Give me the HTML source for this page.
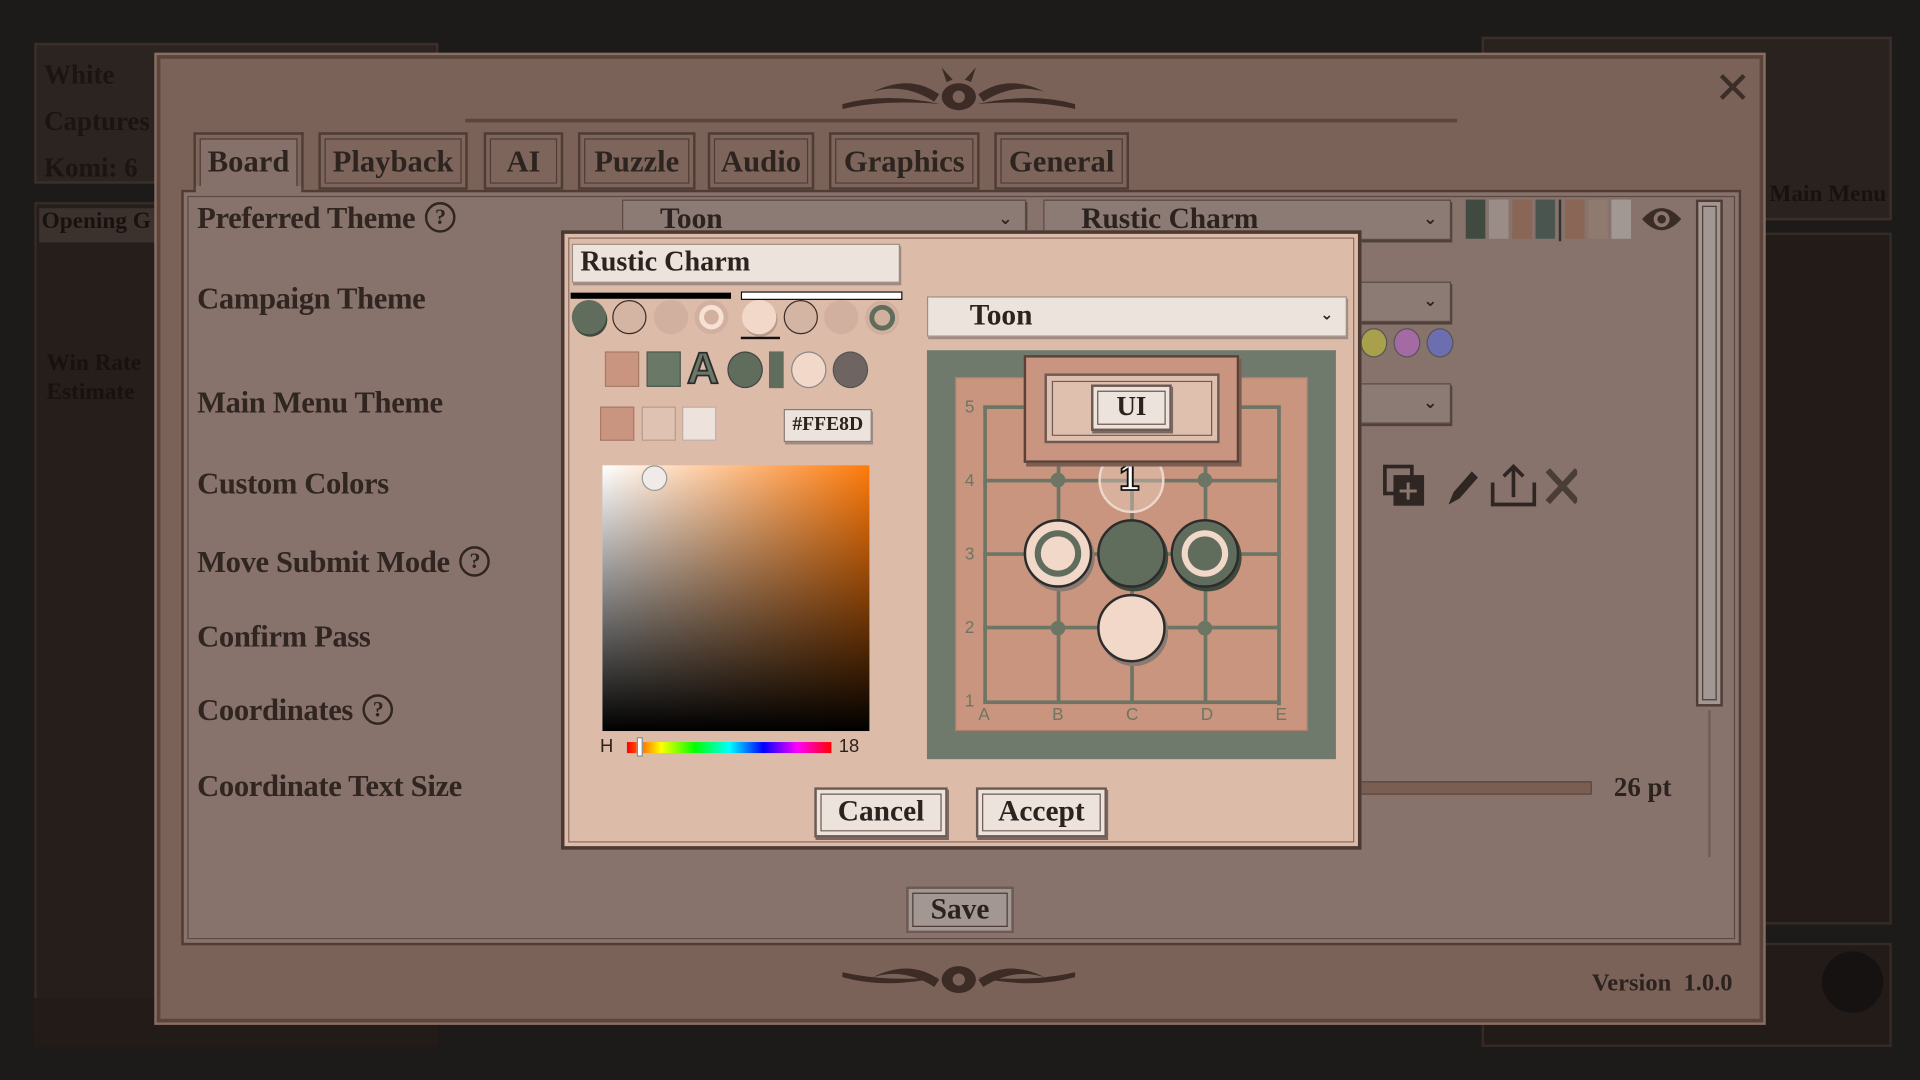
<!DOCTYPE html>
<html><head><meta charset="utf-8"><style>
*{box-sizing:border-box;margin:0;padding:0}
html,body{width:1920px;height:1080px;overflow:hidden;background:#1d1b1a}
#w{position:absolute;left:0;top:0;width:1568px;height:882px;transform:scale(1.22449);transform-origin:0 0;font-family:"Liberation Serif",serif;color:#2c221e}
.a{position:absolute}
.lbl{position:absolute;left:161px;font-size:25px;font-weight:bold;color:#302520;letter-spacing:-0.3px}
.q{display:inline-block;width:25px;height:25px;border:2px solid #302520;border-radius:50%;font-size:18px;text-align:center;line-height:21px;vertical-align:3px;margin-left:8px}
.tab{position:absolute;top:108px;height:47px;background:#7d655b;border:2px solid #4e3c35;box-shadow:inset 0 0 0 3px #7d655b,inset 0 0 0 4px #4e3c35;font-size:25px;font-weight:bold;text-align:center;line-height:46px;color:#2e241f}
.dd{position:absolute;background:#8c7b75;border:1px solid #5a4a44;box-shadow:1px 2px 0 #4f403a;font-size:24px;font-weight:bold;padding-left:30px;line-height:31px}
.chev{position:absolute;right:10px;top:0px;font-size:14px;font-family:"DejaVu Sans",sans-serif}
.c{position:absolute;border-radius:50%}
.btn{position:absolute;background:#ede3dd;border:2px solid #6d5a52;box-shadow:inset 0 0 0 3px #ede3dd,inset 0 0 0 4px #6d5a52,1px 2px 0 #7a675f;text-align:center;font-weight:bold;font-size:24px}
.gl{position:absolute;background:#6d7565}
</style></head><body><div id="w">
<div class="a" style="left:28px;top:35px;width:330px;height:115px;background:#2c2420;border:2px solid #3a2f2a"></div>
<div class="a" style="left:36px;top:42px;font-size:22px;color:#1a1412;font-weight:bold;line-height:38px">White<br>Captures<br>Komi: 6</div>
<div class="a" style="left:28px;top:165px;width:125px;height:675px;background:#251e1b;border:2px solid #342a26"></div>
<div class="a" style="left:32px;top:170px;width:120px;height:28px;background:#3b322e;font-size:19px;color:#17110f;font-weight:bold;padding-left:2px">Opening G</div>
<div class="a" style="left:38px;top:285px;font-size:19px;color:#17110f;font-weight:bold;line-height:24px">Win Rate<br>Estimate</div>
<div class="a" style="left:1210px;top:30px;width:335px;height:150px;background:#2a221f;border:2px solid #3a2f2a"></div>
<div class="a" style="left:1445px;top:148px;font-size:19px;color:#17110f;font-weight:bold">Main Menu</div>
<div class="a" style="left:1210px;top:190px;width:335px;height:565px;background:#231b18;border:2px solid #342a26"></div>
<div class="a" style="left:1210px;top:770px;width:335px;height:85px;background:#231b18;border:2px solid #342a26"></div>
<div class="c" style="left:1488px;top:777px;width:50px;height:50px;background:#151211"></div>
<div class="a" style="left:28px;top:815px;width:330px;height:40px;background:#231b18"></div>
<div class="a" style="left:128px;top:45px;width:1312px;height:790px;background:#7b6258;border:3px solid #5a453d;box-shadow:0 0 0 2px #8a6e62"></div>
<div class="a" style="left:380px;top:97px;width:810px;height:3px;background:#5b463d"></div>
<svg class="a" style="left:683px;top:55px" width="200" height="45" viewBox="0 0 200 45"><g fill="#3c2c25"><ellipse cx="100" cy="24" rx="14" ry="11"/><path d="M84 22 Q60 5 30 20 Q55 12 80 28Z M116 22 Q140 5 170 20 Q145 12 120 28Z M5 30 Q40 20 85 30 Q40 26 5 34Z M195 30 Q160 20 115 30 Q160 26 195 34Z M90 12 L86 0 L95 10Z M110 12 L114 0 L105 10Z"/></g><circle cx="100" cy="24" r="5" fill="#7b6258"/></svg>
<svg class="a" style="left:683px;top:778px" width="200" height="45" viewBox="0 0 200 45"><g fill="#3c2c25"><ellipse cx="100" cy="22" rx="14" ry="11"/><path d="M84 22 Q60 5 30 20 Q55 12 80 28Z M116 22 Q140 5 170 20 Q145 12 120 28Z M5 20 Q40 30 85 20 Q40 24 5 16Z M195 20 Q160 30 115 20 Q160 24 195 16Z"/></g><circle cx="100" cy="22" r="5" fill="#7b6258"/></svg>
<div class="a" style="left:1400px;top:52px;font-size:36px;color:#3b2d27;font-family:'DejaVu Sans',sans-serif">✕</div>
<div class="tab" style="left:158px;width:90px;height:52px;background:#86716a;border-bottom:none">Board</div>
<div class="tab" style="left:260px;width:122px">Playback</div>
<div class="tab" style="left:395px;width:65px">AI</div>
<div class="tab" style="left:472px;width:96px">Puzzle</div>
<div class="tab" style="left:578px;width:87px">Audio</div>
<div class="tab" style="left:677px;width:123px">Graphics</div>
<div class="tab" style="left:812px;width:110px">General</div>
<div class="a" style="left:148px;top:155px;width:1274px;height:617px;background:#87736b;border:2px solid #4e3c35;box-shadow:inset 0 0 0 3px #87736b,inset 0 0 0 4px #5a4841"></div>
<div class="a" style="left:160px;top:152px;width:86px;height:8px;background:#86716a"></div>
<div class="lbl" style="top:165px">Preferred Theme<span class="q">?</span></div>
<div class="lbl" style="top:231px">Campaign Theme</div>
<div class="lbl" style="top:316px">Main Menu Theme</div>
<div class="lbl" style="top:382px">Custom Colors</div>
<div class="lbl" style="top:446px">Move Submit Mode<span class="q">?</span></div>
<div class="lbl" style="top:507px">Confirm Pass</div>
<div class="lbl" style="top:567px">Coordinates<span class="q">?</span></div>
<div class="lbl" style="top:629px">Coordinate Text Size</div>
<div class="dd" style="left:508px;top:163px;width:330px;height:33px">Toon<span class="chev">⌄</span></div>
<div class="dd" style="left:852px;top:163px;width:333px;height:33px">Rustic Charm<span class="chev">⌄</span></div>
<div class="dd" style="left:1100px;top:230px;width:85px;height:33px"><span class="chev">⌄</span></div>
<div class="dd" style="left:1100px;top:313px;width:85px;height:33px"><span class="chev">⌄</span></div>
<div class="a" style="left:1197px;top:163px;display:flex;gap:3px">
<div style="width:16px;height:32px;background:#414a40"></div><div style="width:16px;height:32px;background:#9a8c87"></div><div style="width:16px;height:32px;background:#8a6656"></div><div style="width:16px;height:32px;background:#4a5550"></div><div style="width:2px;height:34px;background:#333"></div><div style="width:16px;height:32px;background:#8a6656"></div><div style="width:16px;height:32px;background:#8f7a70"></div><div style="width:16px;height:32px;background:#a29893"></div></div>
<svg class="a" style="left:1340px;top:167px" width="34" height="24" viewBox="0 0 34 24"><path d="M1 12 Q17 -6 33 12 Q17 30 1 12Z" fill="#3a2d28"/><circle cx="17" cy="12" r="5" fill="none" stroke="#8a766c" stroke-width="3"/></svg>
<div class="c" style="left:1111px;top:268px;width:22px;height:24px;background:#a8a04a;border:1px solid #555"></div>
<div class="c" style="left:1138px;top:268px;width:22px;height:24px;background:#a36aa3;border:1px solid #555"></div>
<div class="c" style="left:1165px;top:268px;width:22px;height:24px;background:#6d6eb0;border:1px solid #555"></div>
<svg class="a" style="left:1128px;top:378px" width="160" height="38" viewBox="0 0 160 38"><g fill="none" stroke="#2f2522" stroke-width="3"><rect x="3" y="3" width="22" height="22"/></g><rect x="10" y="10" width="25" height="25" fill="#2f2522"/><path d="M22 16v14M15 23h14" stroke="#8a766c" stroke-width="2.5"/><path d="M55 34l4-10 15-17 5 5-15 17z" fill="#2f2522"/><path d="M91 16v18h34V16M108 28V4M100 11l8-8 8 8" fill="none" stroke="#2f2522" stroke-width="3"/><path d="M136 6l24 26M160 6l-24 26" stroke="#4a3c37" stroke-width="5"/></svg>
<div class="a" style="left:1385px;top:163px;width:22px;height:414px;border:2px solid #4e3c35;background:#a39794;box-shadow:inset 0 0 0 3px #a39794,inset 0 0 0 4px #4e3c35"></div>
<div class="a" style="left:1395px;top:580px;width:2px;height:120px;background:#6e5c55"></div>
<div class="a" style="left:1110px;top:638px;width:190px;height:11px;background:#7a5e52;border:1px solid #5a463f"></div>
<div class="a" style="left:1318px;top:630px;font-size:22px;font-weight:bold">26 pt</div>
<div class="btn" style="left:740px;top:724px;width:88px;height:38px;background:#a29793;box-shadow:inset 0 0 0 3px #a29793,inset 0 0 0 4px #4e3c35;line-height:34px">Save</div>
<div class="a" style="left:1300px;top:792px;font-size:20px;font-weight:bold">Version&nbsp; 1.0.0</div>
<div class="a" style="left:458px;top:188px;width:654px;height:506px;background:#dcbba9;border:3px solid #4a3a33;box-shadow:inset 0 0 0 3px #dcbba9,inset 0 0 0 4px #8a6e62"></div>
<div class="btn" style="left:467px;top:199px;width:268px;height:32px;text-align:left;padding-left:6px;font-size:23px;line-height:28px;box-shadow:1px 2px 0 #9d8a80;border:1px solid #9d8a80">Rustic Charm</div>
<div class="a" style="left:466px;top:239px;width:131px;height:5px;background:#000"></div>
<div class="a" style="left:605px;top:238px;width:132px;height:7px;background:#fff;border:1px solid #111"></div>
<div class="c" style="left:467px;top:245px;width:28px;height:28px;background:#616d5c;box-shadow:1px 2px 0 #3f4a3c"></div>
<div class="c" style="left:500px;top:245px;width:28px;height:28px;background:#d4b4a2;border:1.5px solid #3b2d28"></div>
<div class="c" style="left:534px;top:245px;width:28px;height:28px;background:#d2b09f"></div>
<div class="c" style="left:567px;top:245px;width:28px;height:28px;background:#d2b09f;box-shadow:inset 0 0 0 4px #d2b09f,inset 0 0 0 8px #f7e1d2"></div>
<div class="c" style="left:606px;top:245px;width:28px;height:28px;background:#f2d8c9;box-shadow:1px 2px 0 #b89a8a"></div>
<div class="a" style="left:605px;top:275px;width:32px;height:2px;background:#111"></div>
<div class="c" style="left:640px;top:245px;width:28px;height:28px;background:#d4b4a2;border:1.5px solid #3b2d28"></div>
<div class="c" style="left:673px;top:245px;width:28px;height:28px;background:#d2b09f"></div>
<div class="c" style="left:707px;top:246px;width:27px;height:27px;background:#d2b09f;box-shadow:inset 0 0 0 3px #d2b09f,inset 0 0 0 7px #616d5c"></div>
<div class="a" style="left:494px;top:287px;width:28px;height:29px;background:#c99580;border:1px solid #a87a68"></div>
<div class="a" style="left:528px;top:287px;width:28px;height:29px;background:#6a7868;border:1px solid #4e5a4d"></div>
<div class="a" style="left:561px;top:281px;font-size:36px;font-family:'Liberation Sans',sans-serif;font-weight:bold;color:#6a7868;-webkit-text-stroke:1.5px #2c2c2c;line-height:40px">A</div>
<div class="c" style="left:594px;top:287px;width:29px;height:30px;background:#616d5c;border:1px solid #444"></div>
<div class="a" style="left:628px;top:287px;width:12px;height:30px;background:#616d5c"></div>
<div class="c" style="left:646px;top:287px;width:29px;height:30px;background:#f2d8c9;border:1px solid #888"></div>
<div class="c" style="left:680px;top:287px;width:29px;height:30px;background:#6e6562;border:1px solid #555"></div>
<div class="a" style="left:490px;top:332px;width:28px;height:28px;background:#c99580;border:1px solid #a87a68"></div>
<div class="a" style="left:524px;top:332px;width:28px;height:28px;background:#dfc2b2;border:1px solid #b99b8b"></div>
<div class="a" style="left:557px;top:332px;width:28px;height:28px;background:#ede2dc;border:1px solid #c0aaa0"></div>
<div class="btn" style="left:640px;top:334px;width:72px;height:27px;font-size:16px;line-height:24px;border:1px solid #8a7a72;box-shadow:1px 2px 0 #a08c82">#FFE8D</div>
<div class="a" style="left:492px;top:380px;width:218px;height:217px;background:linear-gradient(to bottom,rgba(0,0,0,0),#000),linear-gradient(to right,#fff,#ff7a0a)"></div>
<div class="c" style="left:524px;top:380px;width:21px;height:21px;background:#f0ebe8;border:1px solid #999"></div>
<div class="a" style="left:490px;top:601px;font-size:15px;font-family:'Liberation Sans',sans-serif">H</div>
<div class="a" style="left:512px;top:606px;width:167px;height:9px;background:linear-gradient(to right,#f00,#ff0,#0f0,#0ff,#00f,#f0f,#f00)"></div>
<div class="a" style="left:520px;top:602px;width:5px;height:16px;background:#fff;border:1px solid #888"></div>
<div class="a" style="left:685px;top:601px;font-size:15px;font-family:'Liberation Sans',sans-serif">18</div>
<div class="btn" style="left:757px;top:242px;width:343px;height:33px;text-align:left;padding-left:34px;line-height:30px;border:1px solid #a08c82;box-shadow:1px 2px 0 #a08c82">Toon<span class="chev" style="font-size:13px">⌄</span></div>
<div class="a" style="left:757px;top:286px;width:334px;height:334px;background:#6f7a6c"></div>
<div class="a" style="left:780px;top:308px;width:288px;height:289px;background:#c9957f;border:1px solid #b07e6a"></div>
<div class="gl" style="left:803px;top:332px;width:3px;height:241px"></div>
<div class="gl" style="left:863px;top:332px;width:3px;height:241px"></div>
<div class="gl" style="left:923px;top:332px;width:3px;height:241px"></div>
<div class="gl" style="left:983px;top:332px;width:3px;height:241px"></div>
<div class="gl" style="left:1043px;top:332px;width:3px;height:244px"></div>
<div class="gl" style="left:803px;top:331px;width:243px;height:3px"></div>
<div class="gl" style="left:803px;top:391px;width:243px;height:3px"></div>
<div class="gl" style="left:803px;top:451px;width:243px;height:3px"></div>
<div class="gl" style="left:803px;top:511px;width:243px;height:3px"></div>
<div class="gl" style="left:803px;top:572px;width:243px;height:3px"></div>
<div class="c" style="left:858px;top:386px;width:12px;height:12px;background:#6d7565"></div>
<div class="c" style="left:978px;top:386px;width:12px;height:12px;background:#6d7565"></div>
<div class="c" style="left:858px;top:507px;width:12px;height:12px;background:#6d7565"></div>
<div class="c" style="left:978px;top:507px;width:12px;height:12px;background:#6d7565"></div>
<div class="a" style="left:788px;top:302px;font-size:14px;font-family:'Liberation Sans',sans-serif;color:#6d7565;line-height:60px">5<br>4<br>3<br>2<br>1</div>
<div class="a" style="left:799px;top:575px;width:252px;font-size:14px;font-family:'Liberation Sans',sans-serif;color:#6d7565;display:flex;justify-content:space-between"><span>A</span><span>B</span><span>C</span><span>D</span><span>E</span></div>
<div class="c" style="left:897px;top:365px;width:54px;height:54px;background:rgba(245,225,212,.35);border:2px solid #ecd7cb"></div>
<div class="a" style="left:914px;top:374px;font-size:30px;font-weight:bold;font-family:'Liberation Sans',sans-serif;color:#fff;-webkit-text-stroke:1.5px #111">1</div>
<div class="c" style="left:836px;top:424px;width:56px;height:56px;background:#f2d8c9;border:2px solid #2c2c2c;box-shadow:inset 0 0 0 7px #f2d8c9,inset 0 0 0 12px #616d5c,2px 3px 0 #8a7a70"></div>
<div class="c" style="left:896px;top:424px;width:56px;height:56px;background:#616d5c;border:2px solid #2c2c2c;box-shadow:2px 3px 0 #3f4a3c"></div>
<div class="c" style="left:956px;top:424px;width:56px;height:56px;background:#616d5c;border:2px solid #2c2c2c;box-shadow:inset 0 0 0 7px #616d5c,inset 0 0 0 12px #f2d8c9,2px 3px 0 #3f4a3c"></div>
<div class="c" style="left:896px;top:485px;width:56px;height:56px;background:#f2d8c9;border:2px solid #2c2c2c;box-shadow:2px 3px 0 #8a7a70"></div>
<div class="a" style="left:836px;top:290px;width:176px;height:88px;background:#c99580;border:2px solid #5a4038;box-shadow:2px 3px 0 #7a5e52"></div>
<div class="a" style="left:853px;top:305px;width:143px;height:57px;background:#dfc0af;border:2px solid #6d5a52;box-shadow:inset 0 0 0 4px #dfc0af,inset 0 0 0 5px #6d5a52"></div>
<div class="btn" style="left:891px;top:314px;width:66px;height:38px;font-size:22px;line-height:32px">UI</div>
<div class="btn" style="left:665px;top:643px;width:109px;height:41px;line-height:37px">Cancel</div>
<div class="btn" style="left:797px;top:643px;width:107px;height:41px;line-height:37px">Accept</div>
</div></body></html>
